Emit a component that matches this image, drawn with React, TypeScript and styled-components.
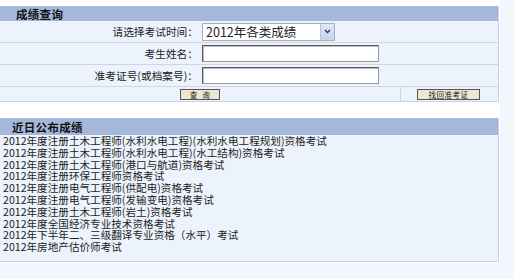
import React from "react";
import styled, { createGlobalStyle } from "styled-components";

const Global = createGlobalStyle`
  html, body { margin: 0; padding: 0; }
  body {
    background: #f2f6fd;
    font-family: "Noto Sans CJK SC", "Noto Sans", sans-serif;
    color: #111;
  }
`;

const Page = styled.div`
  width: 500px;
  background: #ffffff;
  padding-top: 6px;
  padding-bottom: 1px;
`;

const Panel = styled.div<{ $mt?: number }>`
  width: 498px;
  margin-top: ${(p) => p.$mt ?? 0}px;
  border-right: 1px solid #c9d3e5;
  border-bottom: 1px solid #c9d3e5;
  background: #edf3fc;
`;

const Header = styled.div<{ $h: number; $pl: number }>`
  height: ${(p) => p.$h}px;
  background: #a5b7db;
  display: flex;
  align-items: center;
  padding-left: ${(p) => p.$pl}px;
  font-size: 11.5px;
  font-weight: 700;
  color: #111;
  letter-spacing: 0.3px;
`;

const FormRow = styled.div`
  display: grid;
  grid-template-columns: 200px 1fr;
  height: 22px;
  border-bottom: 1px solid #cdd6e6;
  box-sizing: border-box;
  align-items: center;
`;

const Label = styled.div`
  text-align: right;
  padding-right: 2px;
  font-size: 10.7px;
  color: #222;
`;

const Field = styled.div`
  padding-left: 2px;
  display: flex;
  align-items: center;
`;

const SelectBox = styled.div`
  width: 133px;
  height: 18px;
  box-sizing: border-box;
  border: 1px solid #a9b0ba;
  background: #fff;
  display: flex;
  align-items: center;
  justify-content: space-between;
  font-size: 12.5px;
  color: #222;
  padding-left: 3px;
`;

const Arrow = styled.div`
  width: 13px;
  height: 16px;
  background: linear-gradient(#dfe8f8, #c3d3ef);
  border-left: 1px solid #b7c6e3;
  display: flex;
  align-items: center;
  justify-content: center;
`;

const TextInput = styled.input`
  width: 177px;
  height: 17px;
  box-sizing: border-box;
  border: 1px solid #5a5a5a;
  border-right-color: #9a9a9a;
  border-bottom-color: #9a9a9a;
  box-shadow: inset 1px 1px 0 #bdbdbd;
  background: #fff;
  padding: 0;
  margin: 0;
`;

const ButtonRow = styled.div`
  display: grid;
  grid-template-columns: 400px 1fr;
  height: 14px;
`;

const ButtonCell = styled.div<{ $pl: number; $divider?: boolean }>`
  display: flex;
  align-items: center;
  padding-left: ${(p) => p.$pl}px;
  border-left: ${(p) => (p.$divider ? "1px solid #cdd6e6" : "none")};
`;

const Btn = styled.button<{ $w: number }>`
  width: ${(p) => p.$w}px;
  height: 11px;
  box-sizing: border-box;
  border: 1px solid #555;
  background: #ece6d2;
  font-family: "Noto Sans CJK SC", sans-serif;
  font-size: 7.5px;
  line-height: 9px;
  padding: 0;
  color: #222;
  display: flex;
  align-items: center;
  justify-content: center;
  letter-spacing: 0.5px;
`;

const List = styled.ul`
  list-style: none;
  margin: 0;
  padding: 0 0 8px 3px;
`;

const Item = styled.li`
  font-size: 10.6px;
  line-height: 11.8px;
  height: 11.8px;
  color: #222;
  white-space: nowrap;
`;

const items = [
  "2012年度注册土木工程师(水利水电工程)(水利水电工程规划)资格考试",
  "2012年度注册土木工程师(水利水电工程)(水工结构)资格考试",
  "2012年度注册土木工程师(港口与航道)资格考试",
  "2012年度注册环保工程师资格考试",
  "2012年度注册电气工程师(供配电)资格考试",
  "2012年度注册电气工程师(发输变电)资格考试",
  "2012年度注册土木工程师(岩土)资格考试",
  "2012年度全国经济专业技术资格考试",
  "2012年下半年二、三级翻译专业资格（水平）考试",
  "2012年房地产估价师考试",
];

export default function App() {
  return (
    <>
      <Global />
      <Page>
        <Panel>
          <Header $h={15} $pl={16}>成绩查询</Header>
          <FormRow>
            <Label>请选择考试时间：</Label>
            <Field>
              <SelectBox>
                <span>2012年各类成绩</span>
                <Arrow>
                  <svg width="7" height="5" viewBox="0 0 7 5">
                    <path d="M1 1 L3.5 3.5 L6 1" stroke="#334" strokeWidth="1.3" fill="none" />
                  </svg>
                </Arrow>
              </SelectBox>
            </Field>
          </FormRow>
          <FormRow>
            <Label>考生姓名：</Label>
            <Field>
              <TextInput type="text" />
            </Field>
          </FormRow>
          <FormRow>
            <Label>准考证号(或档案号)：</Label>
            <Field>
              <TextInput type="text" />
            </Field>
          </FormRow>
          <ButtonRow>
            <ButtonCell $pl={180}>
              <Btn $w={40}>查&nbsp;&nbsp;询</Btn>
            </ButtonCell>
            <ButtonCell $pl={16} $divider>
              <Btn $w={63}>找回准考证</Btn>
            </ButtonCell>
          </ButtonRow>
        </Panel>
        <Panel $mt={16}>
          <Header $h={17} $pl={12}>近日公布成绩</Header>
          <List>
            {items.map((t) => (
              <Item key={t}>{t}</Item>
            ))}
          </List>
        </Panel>
      </Page>
    </>
  );
}
